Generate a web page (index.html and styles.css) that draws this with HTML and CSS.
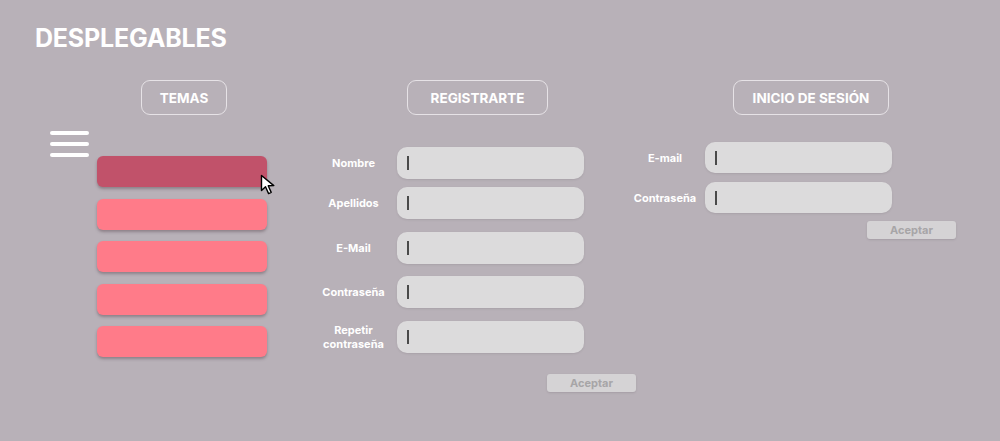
FILE: index.html
```html
<!DOCTYPE html>
<html lang="es">
<head>
<meta charset="utf-8">
<title>Desplegables</title>
<link rel="stylesheet" href="styles.css">
</head>
<body>
<div class="page">
  <h1 class="title">DESPLEGABLES</h1>
  <main class="main">
    <section class="col col-temas">
      <div class="tab tab-temas">TEMAS</div>
      <div class="temas-body">
        <div class="burger"><span></span><span></span><span></span></div>
        <div class="list">
          <div class="item item-active">
            <svg class="pointer" width="18" height="22" viewBox="0 0 18 22"><path d="M1.5 1.5 L1.5 16.5 L5.5 12.8 L8.6 19.6 L11.2 18.4 L8.2 11.8 L13.8 11.6 Z" fill="#fff" stroke="#000" stroke-width="1.4" stroke-linejoin="round"/></svg>
          </div>
          <div class="item"></div>
          <div class="item"></div>
          <div class="item"></div>
          <div class="item"></div>
        </div>
      </div>
    </section>

    <section class="col col-reg">
      <div class="tab tab-reg">REGISTRARTE</div>
      <div class="form form-reg">
        <div class="row"><label class="lbl">Nombre</label><div class="field"><span class="caret"></span></div></div>
        <div class="row r-tight"><label class="lbl">Apellidos</label><div class="field"><span class="caret"></span></div></div>
        <div class="row"><label class="lbl">E-Mail</label><div class="field"><span class="caret"></span></div></div>
        <div class="row r-wide"><label class="lbl">Contraseña</label><div class="field"><span class="caret"></span></div></div>
        <div class="row"><label class="lbl">Repetir<br>contraseña</label><div class="field"><span class="caret"></span></div></div>
        <div class="actions actions-reg"><button class="accept">Aceptar</button></div>
      </div>
    </section>

    <section class="col col-login">
      <div class="tab tab-login">INICIO DE SESIÓN</div>
      <div class="form form-login">
        <div class="row row-login"><label class="lbl lbl-login">E-mail</label><div class="field"><span class="caret"></span></div></div>
        <div class="row row-login r-login2"><label class="lbl lbl-login">Contraseña</label><div class="field"><span class="caret"></span></div></div>
        <div class="actions actions-login"><button class="accept">Aceptar</button></div>
      </div>
    </section>
  </main>
</div>
</body>
</html>
```
FILE: styles.css
```css
* { box-sizing: border-box; margin: 0; padding: 0; }
html, body { width: 1000px; height: 441px; overflow: hidden; }
body {
  background: #b8b1b8;
  font-family: Inter, "Noto Sans", "Liberation Sans", sans-serif;
  color: #fff;
}
.page { padding: 24px 0 0 35px; }
.title {
  font-size: 25px;
  font-weight: 700;
  line-height: 28px;
  letter-spacing: -0.2px;
  color: #fff;
}
.main {
  display: flex;
  margin-top: 28px;
}
.tab {
  height: 35px;
  border: 1px solid #e6e2e6;
  border-radius: 9px;
  display: flex;
  align-items: center;
  justify-content: center;
  font-size: 13.5px;
  font-weight: 700;
  color: #fff;
}
.col-temas { width: 275px; padding-left: 15px; }
.tab-temas { width: 86px; margin-left: 91px; }
.temas-body { display: flex; margin-top: 16px; }
.burger {
  width: 39px;
  display: flex;
  flex-direction: column;
  gap: 7px;
}
.burger span {
  display: block;
  height: 4px;
  border-radius: 2px;
  background: #fff;
}
.list {
  margin-left: 8px;
  margin-top: 25px;
  display: flex;
  flex-direction: column;
  gap: 11.5px;
}
.item {
  position: relative;
  width: 170px;
  height: 31px;
  border-radius: 6px;
  background: #ff7b89;
  box-shadow: 0 2px 3px rgba(60, 40, 50, 0.35);
}
.item-active { background: #c1526a; }
.pointer { position: absolute; left: 163px; top: 18px; }

.col-reg { width: 310px; }
.tab-reg { width: 141px; margin-left: 97px; }
.form-reg { margin-top: 32px; }
.row { display: flex; align-items: center; margin-top: 12.5px; }
.row:first-child { margin-top: 0; }
.row.r-tight { margin-top: 8px; }
.lbl {
  width: 87px;
  text-align: center;
  font-size: 11px;
  font-weight: 700;
  line-height: 14px;
  color: #fff;
}
.field {
  width: 187px;
  height: 32px;
  border-radius: 10px;
  background: #dcdbdc;
  display: flex;
  align-items: center;
  padding-left: 10px;
  box-shadow: 0 1px 2px rgba(90, 80, 90, 0.15);
}
.caret { width: 1.5px; height: 14px; background: #4a4a4a; }
.actions { display: flex; justify-content: flex-end; }
.actions-reg { width: 326px; margin-top: 21px; }
.accept {
  width: 89px;
  height: 18px;
  border: none;
  border-radius: 3px;
  background: #d5d3d5;
  color: #a7a5a7;
  font-family: inherit;
  font-size: 11px;
  font-weight: 700;
  box-shadow: 0 1px 2px rgba(90, 80, 90, 0.2);
}

.col-login { width: 340px; margin-left: 5px; }
.tab-login { width: 156px; margin-left: 108px; }
.form-login { margin-top: 27px; }
.lbl-login { width: 80px; }
.row-login .field { height: 31px; }
.row.r-login2 { margin-top: 9px; }
.actions-login { width: 331px; margin-top: 8px; }
```
